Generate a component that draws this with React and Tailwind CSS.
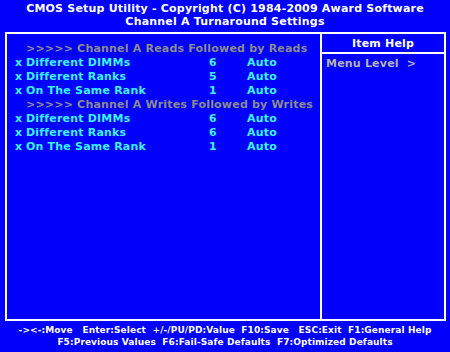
export default function App() {
  const font = { fontFamily: '"DejaVu Sans", Verdana, sans-serif' };
  const Row = ({ label, n }) => (
    <div className="flex h-[14px] items-center leading-[14px] text-[#3cf2ff]">
      <span className="w-[11px]">x</span>
      <span className="w-[183px]">{label}</span>
      <span className="w-[38px]">{n}</span>
      <span>Auto</span>
    </div>
  );
  const Head = ({ children }) => (
    <div className="flex h-[14px] items-center leading-[14px] text-[#8c8c8c]">
      <span className="w-[11px]" />
      <span className="whitespace-pre">{children}</span>
    </div>
  );
  return (
    <div
      className="w-[450px] h-[352px] bg-[#0000fb] font-bold text-[11px] tracking-[0.2px] overflow-hidden flex flex-col"
      style={font}
    >
      <div className="pt-[2px] text-white text-center leading-[13px]">
        <div>CMOS Setup Utility - Copyright (C) 1984-2009 Award Software</div>
        <div>Channel A Turnaround Settings</div>
      </div>
      <div className="mt-[4px] ml-[5px] w-[441px] h-[289px] border-2 border-white flex">
        <div className="w-[315px] border-r-2 border-white pt-[8px] pl-[8px]">
          <Head>{">>>>> Channel A Reads Followed by Reads"}</Head>
          <Row label="Different DIMMs" n="6" />
          <Row label="Different Ranks" n="5" />
          <Row label="On The Same Rank" n="1" />
          <Head>{">>>>> Channel A Writes Followed by Writes"}</Head>
          <Row label="Different DIMMs" n="6" />
          <Row label="Different Ranks" n="6" />
          <Row label="On The Same Rank" n="1" />
        </div>
        <div className="flex-1 flex flex-col">
          <div className="h-[20px] border-b-2 border-white text-white text-center leading-[20px]">
            Item Help
          </div>
          <div className="pl-[4px] pt-[3px] text-[#b4b4b4] leading-[14px] whitespace-pre">
            {"Menu Level  >"}
          </div>
        </div>
      </div>
      <div className="pt-[3px] text-white text-center text-[9px] tracking-[0.1px] leading-[12px] whitespace-pre">
        <div>{"-><-:Move   Enter:Select  +/-/PU/PD:Value  F10:Save   ESC:Exit  F1:General Help"}</div>
        <div>{"F5:Previous Values  F6:Fail-Safe Defaults  F7:Optimized Defaults"}</div>
      </div>
    </div>
  );
}
